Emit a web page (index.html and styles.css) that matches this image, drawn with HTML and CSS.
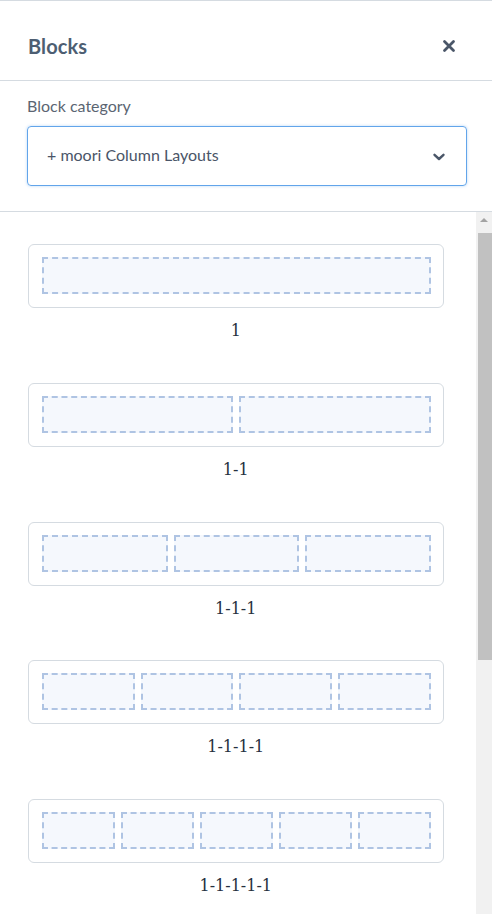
FILE: index.html
```html
<!DOCTYPE html>
<html>
<head>
<meta charset="utf-8">
<link rel="stylesheet" href="styles.css">
</head>
<body>
<div class="panel">
  <header class="panel-header">
    <h2 class="panel-title">Blocks</h2>
    <button class="close-btn" aria-label="Close">
      <svg width="14" height="14" viewBox="0 0 14 14"><path d="M2.5 2.5 L11.5 11.5 M11.5 2.5 L2.5 11.5" stroke="#4a5668" stroke-width="2.8" stroke-linecap="round"/></svg>
    </button>
  </header>
  <div class="category">
    <label class="category-label">Block category</label>
    <div class="select">
      <span class="select-value">+ moori Column Layouts</span>
      <svg class="chevron" width="14" height="10" viewBox="0 0 14 10"><path d="M2.5 2.8 L7 7 L11.5 2.8" fill="none" stroke="#4a5668" stroke-width="2.4" stroke-linecap="round" stroke-linejoin="round"/></svg>
    </div>
  </div>
  <div class="list-wrap">
    <div class="block-list">
      <div class="block-item">
        <div class="preview"><div class="col"></div></div>
        <div class="block-name">1</div>
      </div>
      <div class="block-item">
        <div class="preview"><div class="col"></div><div class="col"></div></div>
        <div class="block-name">1-1</div>
      </div>
      <div class="block-item">
        <div class="preview"><div class="col"></div><div class="col"></div><div class="col"></div></div>
        <div class="block-name">1-1-1</div>
      </div>
      <div class="block-item">
        <div class="preview"><div class="col"></div><div class="col"></div><div class="col"></div><div class="col"></div></div>
        <div class="block-name">1-1-1-1</div>
      </div>
      <div class="block-item">
        <div class="preview"><div class="col"></div><div class="col"></div><div class="col"></div><div class="col"></div><div class="col"></div></div>
        <div class="block-name">1-1-1-1-1</div>
      </div>
    </div>
    <div class="scrollbar" aria-hidden="true">
      <div class="scroll-arrow"></div>
      <div class="scroll-thumb"></div>
    </div>
  </div>
</div>
</body>
</html>
```
FILE: styles.css
```css
html, body {
  margin: 0;
  padding: 0;
  height: 100%;
  background: #ffffff;
}
body {
  font-family: Lato, "Open Sans", sans-serif;
  color: #4a5668;
}
.panel {
  height: 100vh;
  display: flex;
  flex-direction: column;
  box-sizing: border-box;
  border-top: 1px solid #d5dbe1;
}
.panel-header {
  height: 69px;
  flex: none;
  display: flex;
  align-items: center;
  justify-content: space-between;
  padding: 10px 36px 0 28px;
  border-bottom: 1px solid #d5dbe1;
  box-sizing: content-box;
}
.panel-title {
  margin: 0;
  font-size: 20px;
  font-weight: 700;
  color: #4d5e72;
  letter-spacing: 0.1px;
}
.close-btn {
  background: none;
  border: 0;
  padding: 0;
  width: 14px;
  height: 14px;
  display: flex;
  cursor: pointer;
}
.category {
  flex: none;
  padding: 14px 25px 25px 27px;
  border-bottom: 1px solid #d5dbe1;
}
.category-label {
  display: block;
  font-size: 16px;
  line-height: 22px;
  color: #5b6572;
  margin-bottom: 9px;
}
.select {
  height: 58px;
  border: 1px solid #62a5ea;
  border-radius: 4px;
  box-shadow: 0 0 3px rgba(98, 165, 234, 0.45);
  display: flex;
  align-items: center;
  justify-content: space-between;
  padding: 0 20px 0 19px;
}
.select-value {
  font-size: 16px;
  color: #4a5568;
  margin-top: -4px;
}
.chevron {
  margin-top: 2px;
}
.list-wrap {
  flex: 1;
  position: relative;
  overflow: hidden;
}
.block-list {
  height: 100%;
  box-sizing: border-box;
  overflow: hidden;
  padding: 32px 48.5px 20px 28px;
}
.scrollbar {
  position: absolute;
  top: 0;
  right: 0;
  bottom: 0;
  width: 16px;
  background: #f1f1f1;
}
.scroll-arrow {
  position: absolute;
  top: 6px;
  left: 4px;
  width: 0;
  height: 0;
  border-left: 4px solid transparent;
  border-right: 4px solid transparent;
  border-bottom: 4px solid #a3a3a3;
}
.scroll-thumb {
  position: absolute;
  top: 21px;
  left: 2px;
  right: 0;
  height: 427px;
  background: #c1c1c1;
}
.block-item {
  margin-bottom: 39.75px;
}
.preview {
  height: 37px;
  border: 1px solid #d5dbe1;
  border-radius: 6px;
  padding: 12px 12px 13px 13px;
  display: flex;
  gap: 6px;
}
.col {
  flex: 1;
  box-sizing: border-box;
  height: 37px;
  border: 2px dashed #afc4e3;
  background: #f5f8fd;
}
.block-name {
  margin-top: 11px;
  text-align: center;
  font-family: "DejaVu Serif", serif;
  font-size: 16px;
  line-height: 24px;
  color: #263040;
}
```
